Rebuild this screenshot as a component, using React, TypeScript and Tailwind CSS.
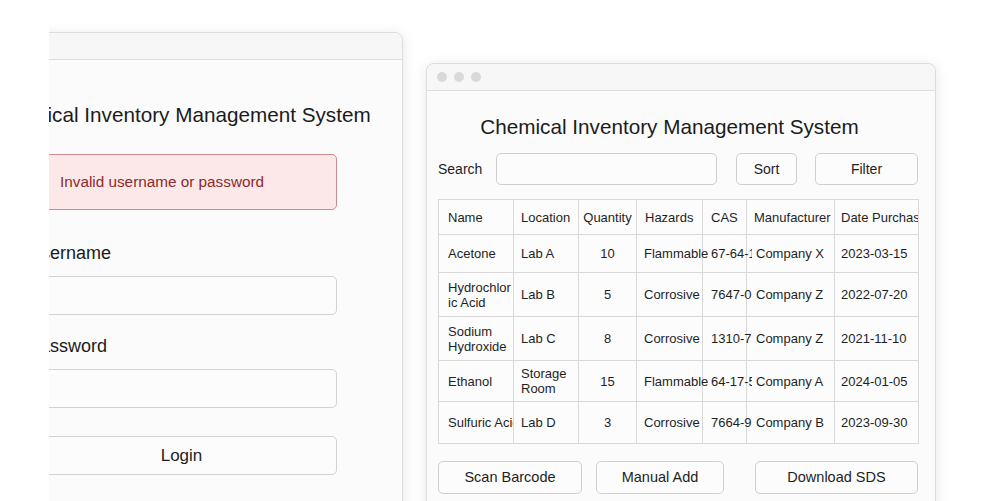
import React from 'react';

const font = { fontFamily: '"Liberation Sans", Arial, sans-serif' };

type Row = {
  name: React.ReactNode;
  location: React.ReactNode;
  qty: string;
  hazard: string;
  cas: string;
  maker: string;
  date: string;
  h: string;
};

const rows: Row[] = [
  { name: 'Acetone', location: 'Lab A', qty: '10', hazard: 'Flammable', cas: '67-64-1', maker: 'Company X', date: '2023-03-15', h: 'h-[38px]' },
  { name: <>Hydrochlor<br />ic Acid</>, location: 'Lab B', qty: '5', hazard: 'Corrosive', cas: '7647-01-0', maker: 'Company Z', date: '2022-07-20', h: 'h-[44px]' },
  { name: <>Sodium<br />Hydroxide</>, location: 'Lab C', qty: '8', hazard: 'Corrosive', cas: '1310-73-2', maker: 'Company Z', date: '2021-11-10', h: 'h-[44px]' },
  { name: 'Ethanol', location: <>Storage<br />Room</>, qty: '15', hazard: 'Flammable', cas: '64-17-5', maker: 'Company A', date: '2024-01-05', h: 'h-[41px]' },
  { name: 'Sulfuric Acid', location: 'Lab D', qty: '3', hazard: 'Corrosive', cas: '7664-93-9', maker: 'Company B', date: '2023-09-30', h: 'h-[42px]' },
];

function LoginWindow() {
  return (
    <div className="absolute inset-y-0 left-[49px] right-0 overflow-hidden">
      <div className="absolute left-[-89px] top-[32px] w-[443px] h-[520px] rounded-[8px] border border-[#dcdcdc] bg-[#fbfbfb] shadow-[0_2px_14px_rgba(0,0,0,0.10)]">
        <div className="h-[27px] border-b border-[#dedede] bg-[#f7f7f7] rounded-t-[8px]" />
        <div className="px-[65px] pt-[41px] flex flex-col">
          <h1 className="-mx-[65px] text-center text-[20.7px] leading-[28px] text-[#1c1c1c] whitespace-nowrap">
            Chemical Inventory Management System
          </h1>
          <div className="mt-[25px] h-[56px] rounded-[5px] border border-[#cf8c8c] bg-[#fce8e8] flex items-center pl-[33px]">
            <span className="text-[15.3px] text-[#8a2b2b]">Invalid username or password</span>
          </div>
          <label className="mt-[31px] pl-[2px] text-[18px] leading-[24px] text-[#1a1a1a]">Username</label>
          <div className="mt-[11px] h-[39px] rounded-[5px] border border-[#d2d2d2] bg-[#fcfcfc]" />
          <label className="mt-[19px] pl-[2px] text-[18px] leading-[24px] text-[#1a1a1a]">Password</label>
          <div className="mt-[11px] h-[39px] rounded-[5px] border border-[#d2d2d2] bg-[#fcfcfc]" />
          <button className="mt-[28px] h-[39px] rounded-[5px] border border-[#d2d2d2] bg-[#fcfcfc] text-[17px] text-[#1f1f1f]">
            Login
          </button>
        </div>
      </div>
    </div>
  );
}

function InventoryWindow() {
  const cell = 'border border-[#d9d9d9] align-middle text-[13px] leading-[15px] text-[#1f1f1f]';
  return (
    <div className="absolute left-[426px] top-[63px] w-[510px] h-[460px] rounded-[8px] border border-[#dcdcdc] bg-[#fbfbfb] shadow-[0_2px_14px_rgba(0,0,0,0.10)]">
      <div className="h-[27px] border-b border-[#dedede] bg-[#f7f7f7] rounded-t-[8px] flex items-center gap-[7px] pl-[10px]">
        <span className="w-[10px] h-[10px] rounded-full bg-[#d9d9d9]" />
        <span className="w-[10px] h-[10px] rounded-full bg-[#d9d9d9]" />
        <span className="w-[10px] h-[10px] rounded-full bg-[#d9d9d9]" />
      </div>
      <div className="pl-[11px] pr-[17px] pt-[22px]">
        <h1 className="text-center pr-[17px] text-[20.7px] leading-[28px] text-[#1c1c1c] whitespace-nowrap">
          Chemical Inventory Management System
        </h1>
        <div className="mt-[12px] flex items-center h-[32px]">
          <span className="w-[58px] text-[14px] text-[#1f1f1f]">Search</span>
          <div className="w-[221px] h-[32px] rounded-[5px] border border-[#cfcfcf] bg-[#fcfcfc]" />
          <button className="ml-[19px] w-[61px] h-[32px] rounded-[5px] border border-[#cfcfcf] bg-[#fcfcfc] text-[14px] text-[#1f1f1f]">
            Sort
          </button>
          <button className="ml-[18px] w-[103px] h-[32px] rounded-[5px] border border-[#cfcfcf] bg-[#fcfcfc] text-[14px] text-[#1f1f1f]">
            Filter
          </button>
        </div>
        <table className="mt-[14px] w-[480px] table-fixed border-collapse bg-[#fcfcfc]">
          <colgroup>
            <col className="w-[75px]" />
            <col className="w-[65px]" />
            <col className="w-[58px]" />
            <col className="w-[66px]" />
            <col className="w-[44px]" />
            <col className="w-[88px]" />
            <col className="w-[84px]" />
          </colgroup>
          <thead>
            <tr className="h-[35px]">
              <th className={`${cell} font-normal text-left pl-[9px]`}>Name</th>
              <th className={`${cell} font-normal text-left pl-[7px]`}>Location</th>
              <th className={`${cell} font-normal text-center`}>Quantity</th>
              <th className={`${cell} font-normal text-left pl-[8px]`}>Hazards</th>
              <th className={`${cell} font-normal text-left pl-[8px]`}>CAS</th>
              <th className={`${cell} font-normal text-left pl-[7px]`}>Manufacturer</th>
              <th className={`${cell} font-normal text-left pl-[6px]`}>
                <div className="overflow-hidden whitespace-nowrap">Date Purchased</div>
              </th>
            </tr>
          </thead>
          <tbody>
            {rows.map((r, i) => (
              <tr key={i} className={r.h}>
                <td className={`${cell} pl-[9px]`}>
                  <div className="overflow-hidden whitespace-nowrap">{r.name}</div>
                </td>
                <td className={`${cell} pl-[7px]`}>{r.location}</td>
                <td className={`${cell} text-center`}>{r.qty}</td>
                <td className={`${cell} pl-[7px] text-[12px]`}>{r.hazard}</td>
                <td className={`${cell} pl-[8px]`}>
                  <div className="w-[41px] overflow-hidden whitespace-nowrap">{r.cas}</div>
                </td>
                <td className={`${cell} pl-[9px] text-[12.5px]`}>{r.maker}</td>
                <td className={`${cell} pl-[6px]`}>{r.date}</td>
              </tr>
            ))}
          </tbody>
        </table>
        <div className="mt-[17px] flex items-center">
          <button className="w-[144px] h-[33px] rounded-[5px] border border-[#cfcfcf] bg-[#fcfcfc] text-[14.5px] text-[#1f1f1f]">
            Scan Barcode
          </button>
          <button className="ml-[14px] w-[128px] h-[33px] rounded-[5px] border border-[#cfcfcf] bg-[#fcfcfc] text-[14.5px] text-[#1f1f1f]">
            Manual Add
          </button>
          <button className="ml-[31px] w-[163px] h-[33px] rounded-[5px] border border-[#cfcfcf] bg-[#fcfcfc] text-[14.5px] text-[#1f1f1f]">
            Download SDS
          </button>
        </div>
      </div>
    </div>
  );
}

export default function App() {
  return (
    <div className="relative w-[994px] h-[501px] overflow-hidden bg-white" style={font}>
      <LoginWindow />
      <InventoryWindow />
    </div>
  );
}
